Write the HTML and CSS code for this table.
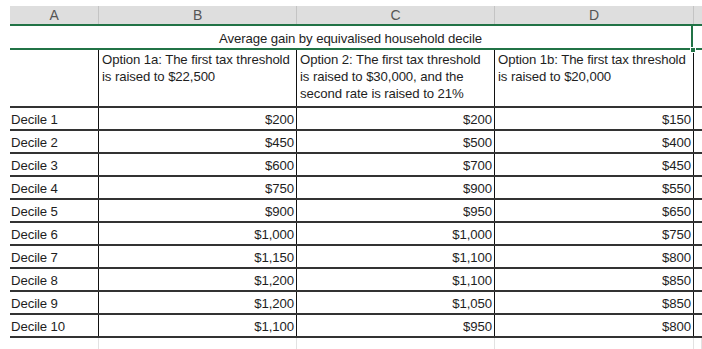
FILE: index.html
```html
<!DOCTYPE html>
<html lang="en">
<head>
    <meta charset="UTF-8">
    <title>Average gain by decile</title>
    <link rel="stylesheet" href="styles.css">
</head>
<body>
    <div class="sheet">
        <div class="row col-heads">
            <div class="head">A</div>
            <div class="head">B</div>
            <div class="head">C</div>
            <div class="head">D</div>
            <div class="head last"></div>
        </div>

        <div class="row title-row">
            <div class="title">Average gain by equivalised household decile<span class="handle"></span></div>
            <div class="cell blank"></div>
        </div>

        <div class="row option-row">
            <div class="cell"></div>
            <div class="cell">Option 1a: The first tax threshold<br>is raised to $22,500</div>
            <div class="cell">Option 2: The first tax threshold<br>is raised to $30,000, and the<br>second rate is raised to 21%</div>
            <div class="cell">Option 1b: The first tax threshold<br>is raised to $20,000</div>
            <div class="cell blank"></div>
        </div>

        <div id="rows"></div>

        <div class="row filler">
            <div class="cell"></div>
            <div class="cell"></div>
            <div class="cell"></div>
            <div class="cell"></div>
            <div class="cell blank"></div>
        </div>
    </div>

    <script>
        const data = [
            ['Decile 1', '$200', '$200', '$150'],
            ['Decile 2', '$450', '$500', '$400'],
            ['Decile 3', '$600', '$700', '$450'],
            ['Decile 4', '$750', '$900', '$550'],
            ['Decile 5', '$900', '$950', '$650'],
            ['Decile 6', '$1,000', '$1,000', '$750'],
            ['Decile 7', '$1,150', '$1,100', '$800'],
            ['Decile 8', '$1,200', '$1,100', '$850'],
            ['Decile 9', '$1,200', '$1,050', '$850'],
            ['Decile 10', '$1,100', '$950', '$800']
        ];
        const rows = document.getElementById('rows');
        data.forEach(function(d) {
            const row = document.createElement('div');
            row.className = 'row data-row';
            d.forEach(function(v, i) {
                const c = document.createElement('div');
                c.className = i === 0 ? 'cell label' : 'cell num';
                c.innerText = v;
                row.appendChild(c);
            });
            const end = document.createElement('div');
            end.className = 'cell blank';
            row.appendChild(end);
            rows.appendChild(row);
        });
    </script>
</body>
</html>
```

FILE: styles.css
```css
body {
    margin: 0;
    background: #fff;
    font-family: "Liberation Sans", Arial, sans-serif;
    font-size: 13.2px;
    letter-spacing: -0.1px;
    color: #1e1e1e;
}
.sheet {
    padding-top: 6px;
    margin-left: 10px;
    overflow: hidden;
    height: 343px;
}
.row {
    display: grid;
    grid-template-columns: 89px 198px 198px 199px 1fr;
}
.col-heads {
    background: #dedede;
    height: 18px;
    border-bottom: 2px solid #217346;
}
.head {
    border-right: 1px solid #c4c4c4;
    text-align: center;
    line-height: 18px;
    font-size: 14px;
    color: #555;
}
.head.last {
    border-right: none;
}
.title-row {
    height: 22px;
    grid-template-rows: 22px;
    border-bottom: 2px solid #217346;
    grid-template-columns: 683px 1fr;
}
.title {
    position: relative;
    height: 22px;
    text-align: center;
    line-height: 26px;
    border-right: 2px solid #217346;
}
.handle {
    position: absolute;
    z-index: 2;
    right: -5px;
    bottom: -5px;
    width: 6px;
    height: 6px;
    background: #217346;
    border: 1px solid #fff;
    box-sizing: border-box;
}
.cell {
    border-right: 1px solid #111;
    overflow: hidden;
    white-space: nowrap;
}
.cell.blank {
    border-right: none;
}
.option-row {
    height: 56px;
    border-bottom: 2px solid #333;
}
.option-row .cell {
    line-height: 17px;
    padding: 1px 0 0 3px;
}
.option-row .cell:first-child {
    padding: 0;
}
.data-row {
    height: 21px;
    border-bottom: 2px solid #333;
}
.data-row .cell {
    line-height: 23px;
}
.label {
    padding-left: 1px;
}
.num {
    text-align: right;
    padding-right: 2px;
}
.filler {
    height: 20px;
}
.filler .cell {
    border-right: 1px solid #e2e2e2;
}
```
